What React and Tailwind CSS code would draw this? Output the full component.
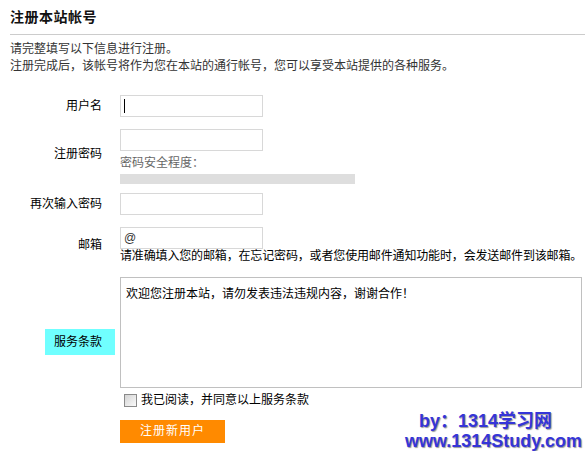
import { useState } from "react";

const font = { fontFamily: '"Liberation Sans", "Noto Sans CJK SC", sans-serif' };

const Row = ({ label, labelClass = "", children, className = "" }) => (
  <div className={`flex items-center ${className}`}>
    <div className="w-[115px] shrink-0 flex justify-end">
      <span className={`text-[12px] leading-[14px] text-black pr-[13px] ${labelClass}`}>{label}</span>
    </div>
    <div className="ml-[5px] flex flex-col">{children}</div>
  </div>
);

const inputCls =
  "w-[143px] h-[22px] border border-[#d8d8d8] bg-white px-[3px] text-[12px] outline-none";

const RegisterPage = () => {
  const [agree, setAgree] = useState(false);

  return (
    <div className="relative w-[585px] h-[451px] overflow-hidden bg-white text-black" style={font}>
      <div className="pl-[10px]">
        <h1 className="pt-[9px] text-[14px] leading-[16px] font-bold tracking-[0.5px] text-[#111]">
          注册本站帐号
        </h1>
        <div className="mt-[9px] h-px bg-[#cccccc]" />
        <div className="mt-[6px] text-[12px] leading-[17px] text-[#333]">
          <p>请完整填写以下信息进行注册。</p>
          <p>注册完成后，该帐号将作为您在本站的通行帐号，您可以享受本站提供的各种服务。</p>
        </div>
      </div>

      <div className="mt-[20px]">
        <Row label="用户名">
          <div className={`${inputCls} flex items-center`}>
            <span className="w-px h-[14px] bg-black" />
          </div>
        </Row>

        <Row label="注册密码" labelClass="pb-[5px]" className="mt-[12px]">
          <input type="password" className={inputCls} />
          <span className="mt-[4px] text-[12px] leading-[17px] text-[#666]">密码安全程度：</span>
          <div className="mt-[2px] w-[235px] h-[10px] bg-[#dedede]" />
        </Row>

        <Row label="再次输入密码" className="mt-[9px]">
          <input type="password" className={inputCls} />
        </Row>

        <Row label="邮箱" className="mt-[12px]">
          <input type="text" defaultValue="@" className={`${inputCls} text-[#333]`} />
          <span className="text-[12px] leading-[14px] whitespace-nowrap tracking-[-0.15px]">
            请准确填入您的邮箱，在忘记密码，或者您使用邮件通知功能时，会发送邮件到该邮箱。
          </span>
        </Row>

        <div className="mt-[14px] flex items-center">
          <div className="w-[115px] shrink-0 flex justify-end">
            <span className="bg-[#70ffff] pl-[9px] pr-[13px] py-[7px] text-[12px] leading-[12px]">
              服务条款
            </span>
          </div>
          <div className="ml-[5px] flex flex-col">
            <textarea
              readOnly
              defaultValue="欢迎您注册本站，请勿发表违法违规内容，谢谢合作！"
              className="w-[462px] h-[111px] resize-none border border-[#c0c0c0] pl-[5px] pt-[9px] text-[12px] leading-[14px] outline-none"
            />
            <label className="mt-[5px] flex items-center text-[12px] leading-[14px]">
              <span
                onClick={() => setAgree(!agree)}
                className="ml-[4px] w-[13px] h-[13px] border border-[#8a8a8a] bg-gradient-to-br from-[#d4d4d4] to-[#fafafa] flex items-center justify-center text-[10px] leading-none"
              >
                {agree ? "✓" : ""}
              </span>
              <span className="ml-[4px]">我已阅读，并同意以上服务条款</span>
            </label>
          </div>
        </div>

        <div className="mt-[11px] ml-[120px]">
          <button className="w-[105px] h-[23px] bg-[#ff8a00] text-white text-[12px] tracking-[1px] leading-[23px]">
            注册新用户
          </button>
        </div>
      </div>

      <div
        className="absolute right-[3px] bottom-[0px] font-bold text-[18px] leading-[20px] text-[#3535d8] [text-shadow:1px_1px_1px_#9a9a9a]"
        style={font}
      >
        <div className="pl-[14px]">by：1314学习网</div>
        <div>www.1314Study.com</div>
      </div>
    </div>
  );
};

export default RegisterPage;
